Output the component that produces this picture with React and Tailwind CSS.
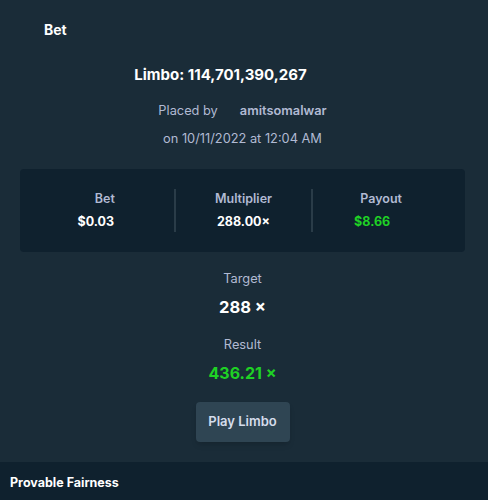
const font = { fontFamily: 'Inter, "Noto Sans", sans-serif' }

function Stat({ label, value, green, icon }) {
  return (
    <div className="flex flex-col items-center justify-center gap-[10px] first:border-l-0 border-l-2 border-[#2a3c48] h-[43px]">
      <span className="text-[12.5px] leading-none font-semibold text-[#b1bad3]">{label}</span>
      <span className="flex items-center">
        <span className={`text-[12.5px] leading-none font-bold ${green ? 'text-[#1fd125]' : 'text-white'}`}>{value}</span>
        {icon && <span className="w-[18px]" />}
      </span>
    </div>
  )
}

export default function App() {
  return (
    <div style={font} className="w-[488px] h-[500px] bg-[#1a2c38] flex flex-col overflow-hidden">
      <div className="flex-1 pr-[3px]">
        <div className="pt-[22px] pl-[44px] text-[14px] leading-4 font-bold text-white">Bet</div>
        <div className="mt-[27px] flex justify-center">
          <span className="text-[15px] leading-5 font-bold text-white">Limbo: 114,701,390,267</span>
          <span className="w-[44px]" />
        </div>
        <div className="mt-[18px] flex justify-center gap-[22px] text-[12.8px] leading-4 text-[#b1bad3]">
          <span>Placed by</span>
          <span className="font-semibold">amitsomalwar</span>
        </div>
        <div className="mt-[12px] text-center text-[12.8px] leading-4 text-[#b1bad3]">on 10/11/2022 at 12:04 AM</div>
        <div className="mx-[20px] mt-[22px] rounded bg-[#0f212e] px-4 py-5 grid grid-cols-3">
          <Stat label="Bet" value="$0.03" icon />
          <Stat label="Multiplier" value="288.00×" />
          <Stat label="Payout" value="$8.66" green icon />
        </div>
        <div className="mt-[19px] text-center text-[12.8px] leading-4 text-[#b1bad3]">Target</div>
        <div className="mt-[10px] text-center text-[16.5px] leading-5 font-bold text-white">288 ×</div>
        <div className="mt-[20px] text-center text-[12.8px] leading-4 text-[#b1bad3]">Result</div>
        <div className="mt-[10px] text-center text-[16px] leading-5 font-bold text-[#1fd125]">436.21 ×</div>
        <div className="mt-[19px] flex justify-center">
          <button className="w-[94px] h-[40px] rounded bg-[#2f4553] text-[13px] font-semibold text-[#d5dceb] shadow-md">Play Limbo</button>
        </div>
      </div>
      <div className="h-[38px] bg-[#0f212e] flex items-center pt-1 pl-[10px] text-[12.5px] font-bold text-white">Provable Fairness</div>
    </div>
  )
}
